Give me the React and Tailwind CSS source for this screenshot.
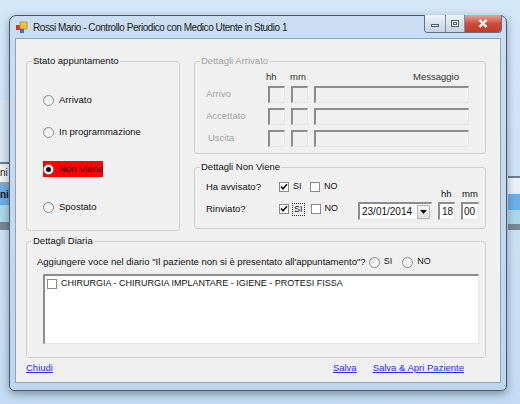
import React from "react";

const font = { fontFamily: '"Liberation Sans", Arial, sans-serif' };

function Radio({ checked }) {
  return (
    <span className="w-[11px] h-[11px] rounded-full border border-[#8b8b8b] bg-gradient-to-br from-[#e8e8e8] to-white flex items-center justify-center shrink-0">
      {checked && <span className="w-[5px] h-[5px] rounded-full bg-[#111]" />}
    </span>
  );
}

function Check({ checked }) {
  return (
    <span className="w-[10px] h-[10px] border border-[#8b8b8b] bg-white flex items-center justify-center shrink-0">
      {checked && (
        <svg width="8" height="8" viewBox="0 0 8 8">
          <path d="M1 3.5 L3 5.7 L7 1.2" stroke="#111" strokeWidth="1.6" fill="none" />
        </svg>
      )}
    </span>
  );
}

function Box({ className = "", disabled, children }) {
  return (
    <div
      className={
        "border-t-2 border-l-2 border-b border-r border-t-[#8d8d8d] border-l-[#8d8d8d] border-b-[#e6e6e6] border-r-[#e6e6e6] " +
        (disabled ? "bg-[#f0f0f0] " : "bg-white ") +
        className
      }
    >
      {children}
    </div>
  );
}

function Group({ title, disabled, className = "", children }) {
  return (
    <fieldset className={"border border-[#d0d0d0] rounded-[3px] px-0 " + className}>
      <legend
        className={
          "ml-[5px] px-[1px] text-[9.5px] leading-[12px] " +
          (disabled ? "text-[#a3a3a3]" : "text-[#111]")
        }
      >
        {title}
      </legend>
      {children}
    </fieldset>
  );
}

function Desktop() {
  return (
    <>
      <div className="absolute left-0 top-[100px] w-[12px] h-[62px] bg-[#d6e6f5]" />
      <div className="absolute left-0 top-[162px] w-[12px] h-[2px] bg-[#6e7c89]" />
      <div className="absolute left-0 top-[164px] w-[12px] h-[18px] bg-[#eef2f6] text-[10px] leading-[18px] text-[#222] overflow-hidden">ni</div>
      <div className="absolute left-0 top-[182px] w-[12px] h-[3px] bg-[#8ea7c0]" />
      <div className="absolute left-0 top-[185px] w-[12px] h-[20px] bg-[#6aaee9] text-[10px] font-bold leading-[20px] text-[#111] overflow-hidden">ni</div>
      <div className="absolute left-0 top-[205px] w-[12px] h-[17px] bg-[#a9d7e9]" />
      <div className="absolute left-0 top-[222px] w-[12px] h-[8px] bg-[#7a8791]" />
      <div className="absolute right-0 top-[176px] w-[12px] h-[2px] bg-[#6e7c89]" />
      <div className="absolute right-0 top-[178px] w-[12px] h-[16px] bg-[#e9f0f6]" />
      <div className="absolute right-0 top-[194px] w-[12px] h-[16px] bg-[#6aaee9]" />
      <div className="absolute right-0 top-[210px] w-[12px] h-[14px] bg-[#a9d7e9]" />
      <div className="absolute right-0 top-[224px] w-[12px] h-[6px] bg-[#7a8791]" />
    </>
  );
}

export default function App() {
  return (
    <div
      className="relative w-[520px] h-[404px] overflow-hidden bg-gradient-to-b from-[#d3e7f9] to-[#c4dcf3]"
      style={font}
    >
      <Desktop />

      {/* window */}
      <div className="absolute left-[9px] top-[15px] w-[498px] h-[376px] rounded-t-[7px] rounded-b-[5px] border border-[#4a5766] bg-gradient-to-b from-[#c9def2] to-[#bdd5ee] shadow-[0_3px_8px_rgba(0,0,0,0.35)] flex flex-col">
        {/* title bar */}
        <div className="h-[22px] flex items-center relative">
          <svg width="12" height="12" viewBox="0 0 12 12" className="ml-[6px] shrink-0">
            <rect x="0" y="4" width="5" height="5" fill="#d9342b" />
            <rect x="4" y="1" width="7" height="7" fill="#f3c23a" stroke="#b88a14" strokeWidth="0.8" />
            <rect x="4" y="8" width="4" height="4" fill="#3b6fd0" />
          </svg>
          <span className="ml-[5px] text-[10px] tracking-[-0.45px] text-[#1a1a1a] leading-[12px] mt-[1px] whitespace-nowrap">
            Rossi Mario - Controllo Periodico con Medico Utente in Studio 1
          </span>
          <div className="absolute right-[4px] top-[-1px] flex h-[18px] w-[78px] rounded-b-[4px] overflow-hidden border border-t-0 border-[#5f7085]">
            <div className="w-[21px] shrink-0 h-full bg-gradient-to-b from-[#eef3f9] to-[#c5d3e3] border-r border-[#7d8ea2] flex items-center justify-center">
              <span className="w-[8px] h-[3px] bg-white border border-[#4b5b70] mt-[4px]" />
            </div>
            <div className="w-[19px] shrink-0 h-full bg-gradient-to-b from-[#eef3f9] to-[#c5d3e3] border-r border-[#7d8ea2] flex items-center justify-center">
              <span className="w-[8px] h-[7px] border border-[#4b5b70] bg-white flex items-center justify-center">
                <span className="w-[4px] h-[3px] border border-[#4b5b70]" />
              </span>
            </div>
            <div className="flex-1 h-full bg-gradient-to-b from-[#e8a393] via-[#cf4c3a] to-[#c03a28] flex items-center justify-center">
              <svg width="10" height="9" viewBox="0 0 10 9">
                <path d="M1.5 1 L8.5 8 M8.5 1 L1.5 8" stroke="#fff" strokeWidth="2.4" />
              </svg>
            </div>
          </div>
        </div>

        {/* client area */}
        <div className="mx-[5px] mb-[7px] flex-1 bg-[#f0f0f0] border border-[#8fa3b7] px-[10px] pt-[16px] text-[9.5px] text-[#111] flex flex-col">
          <div className="flex gap-[14px]">
            {/* stato appuntamento */}
            <Group title="Stato appuntamento" className="w-[154px] h-[176px]">
              <div className="flex flex-col pl-[16px]">
                <div className="flex items-center gap-[5px] h-[16px] mt-[25px]">
                  <Radio />
                  <span>Arrivato</span>
                </div>
                <div className="flex items-center gap-[5px] h-[16px] mt-[16px]">
                  <Radio />
                  <span>In programmazione</span>
                </div>
                <div className="flex items-center gap-[5px] h-[16px] w-[60px] mt-[21px] bg-[#ff0000] whitespace-nowrap">
                  <Radio checked />
                  <span>Non Viene</span>
                </div>
                <div className="flex items-center gap-[5px] h-[16px] mt-[22px]">
                  <Radio />
                  <span>Spostato</span>
                </div>
              </div>
            </Group>

            <div className="flex flex-col gap-[7px]">
              {/* dettagli arrivato */}
              <Group title="Dettagli Arrivato" disabled className="w-[292px] h-[99px]">
                <div className="grid grid-cols-[56px_17px_17px_155px] gap-x-[6px] pl-[11px] text-[#a3a3a3] items-center">
                  <span />
                  <span className="text-[#333] -ml-[2px] h-[13px] leading-[13px] mt-[3px]">hh</span>
                  <span className="text-[#333] -ml-[1px] h-[13px] leading-[13px] mt-[3px]">mm</span>
                  <span className="text-[#333] text-right pr-[10px] h-[13px] leading-[13px] mt-[3px]">Messaggio</span>

                  <span className="mt-[3px]">Arrivo</span>
                  <Box disabled className="h-[17px] mt-[3px]" />
                  <Box disabled className="h-[17px] mt-[3px]" />
                  <Box disabled className="h-[17px] mt-[3px]" />

                  <span className="mt-[5px]">Accettato</span>
                  <Box disabled className="h-[17px] mt-[5px]" />
                  <Box disabled className="h-[17px] mt-[5px]" />
                  <Box disabled className="h-[17px] mt-[5px]" />

                  <span className="mt-[5px] pl-[2px]">Uscita</span>
                  <Box disabled className="h-[17px] mt-[5px]" />
                  <Box disabled className="h-[17px] mt-[5px]" />
                  <Box disabled className="h-[17px] mt-[5px]" />
                </div>
              </Group>

              {/* dettagli non viene */}
              <Group title="Dettagli Non Viene" className="w-[292px] h-[68px]">
                <div className="flex pl-[11px]">
                  <div className="flex flex-col w-[152px]">
                    <div className="flex items-center h-[14px] mt-[7px]">
                      <span className="w-[73px]">Ha avvisato?</span>
                      <Check checked />
                      <span className="ml-[4px] w-[17px] text-[9px]">SI</span>
                      <Check />
                      <span className="ml-[4px] text-[9px]">NO</span>
                    </div>
                    <div className="flex items-center h-[14px] mt-[8px]">
                      <span className="w-[73px]">Rinviato?</span>
                      <Check checked />
                      <span className="ml-[3px] mr-[6px] px-[1px] text-[9px] border border-dotted border-[#333] leading-[11px]">SI</span>
                      <Check />
                      <span className="ml-[4px] text-[9px]">NO</span>
                    </div>
                  </div>
                  <div className="flex flex-col">
                    <div className="flex h-[13px] mt-[14px]">
                      <span className="w-[80px]" />
                      <span className="w-[23px] pl-[3px]">hh</span>
                      <span className="pl-[1px]">mm</span>
                    </div>
                    <div className="flex gap-[6px] mt-[2px]">
                      <Box className="w-[74px] h-[18px] flex items-center justify-between">
                        <span className="pl-[2px] text-[10px]">23/01/2014</span>
                        <span className="w-[13px] h-[14px] mr-[1px] bg-gradient-to-b from-[#f6f6f6] to-[#dedede] border border-[#b5b5b5] flex items-center justify-center">
                          <svg width="7" height="4" viewBox="0 0 7 4">
                            <path d="M0 0 L7 0 L3.5 4 Z" fill="#111" />
                          </svg>
                        </span>
                      </Box>
                      <Box className="w-[17px] h-[18px] pl-[2px] leading-[15px] text-[10px]">18</Box>
                      <Box className="w-[18px] h-[18px] pl-[1px] leading-[15px] text-[10px]">00</Box>
                    </div>
                  </div>
                </div>
              </Group>
            </div>
          </div>

          {/* dettagli diaria */}
          <Group title="Dettagli Diaria" className="w-[460px] h-[123px] mt-[4px]">
            <div className="flex items-center pl-[10px] mt-[8px] h-[14px]">
              <span>Aggiungere voce nel diario "Il paziente non si è presentato all'appuntamento"?</span>
              <span className="ml-[3px] flex items-center gap-[4px]">
                <Radio />
                <span className="text-[9px]">SI</span>
              </span>
              <span className="ml-[10px] flex items-center gap-[4px]">
                <Radio />
                <span className="text-[9px]">NO</span>
              </span>
            </div>
            <Box className="ml-[16px] mt-[5px] w-[436px] h-[70px] pt-[2px] pl-[2px]">
              <div className="flex items-center gap-[4px] h-[12px]">
                <Check />
                <span className="text-[9px]">CHIRURGIA - CHIRURGIA IMPLANTARE - IGIENE - PROTESI FISSA</span>
              </div>
            </Box>
          </Group>

          {/* links */}
          <div className="flex items-center mt-[3px] h-[14px] text-[#2a2aff] underline">
            <span>Chiudi</span>
            <span className="ml-auto">Salva</span>
            <span className="ml-[16px] mr-[26px]">Salva &amp; Apri Paziente</span>
          </div>
        </div>
      </div>
    </div>
  );
}
